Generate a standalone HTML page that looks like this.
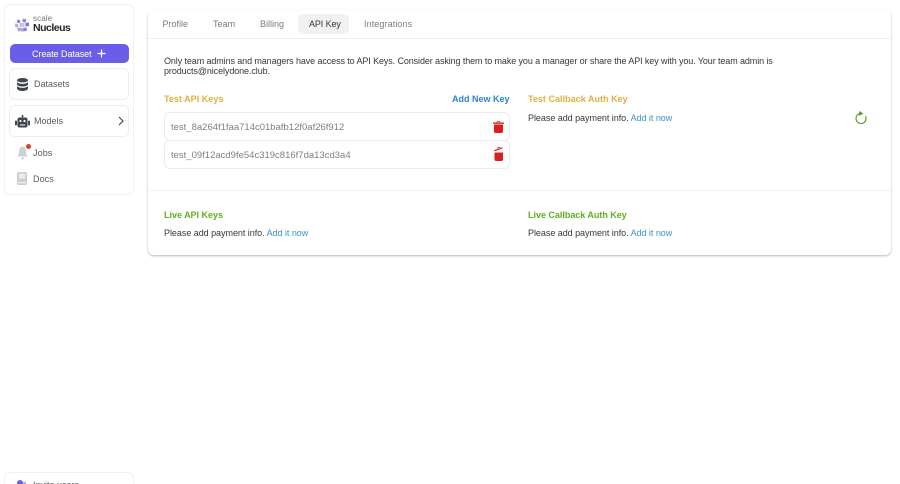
<!DOCTYPE html>
<html>
<head>
<meta charset="utf-8">
<style>
html,body{margin:0;padding:0;width:900px;height:484px;overflow:hidden;background:#fff;font-family:"Liberation Sans",sans-serif;color:#33373e;}
#w{position:relative;width:900px;height:484px;overflow:hidden;background:#fff;}
.a{position:absolute;white-space:nowrap;line-height:12px;font-size:9px;letter-spacing:0;}
.box{position:absolute;box-sizing:border-box;background:#fff;}
svg{position:absolute;overflow:visible;}
.link{color:#3a93c9;}
.y{color:#e0b040;font-weight:bold;letter-spacing:.03px;}
.g{color:#5fae22;font-weight:bold;letter-spacing:-.02px;}
.t{color:#777c84;letter-spacing:0;}
.k{color:#7c8087;font-size:9.5px;letter-spacing:0;}
.s{color:#565b63;}
</style>
</head>
<body>
<div id="w">
<!-- Sidebar -->
<div class="box" style="left:4px;top:4px;width:130px;height:191px;border:1px solid #f1f1f3;border-radius:6px;"></div>
<svg style="left:15px;top:18px" width="14" height="14" viewBox="0 0 14 14">
<g><path d="M2.500 1.500l3 .8-.8 3-3-.8z" fill="#8c7fd6"/><path d="M8 .5l3.500 1-1 3.300-3.300-1z" fill="#8f83da"/><path d="M0 5.500l3 .5v3.500l-3-.5z" fill="#b3abe6"/><rect x="4.500" y="5" width="5" height="4" fill="#c9c7d4"/><path d="M10.500 5l3.500-.5v3.500l-3.500.5z" fill="#8073d2"/><path d="M2 10l3-.5 1.500 3-3 1z" fill="#a9a0e0"/><path d="M8 10l3.500-.5.500 3-3.500 1z" fill="#8c7fd6"/><rect x="5.500" y="10" width="3" height="3.500" fill="#b3abe6"/></g>
</svg>
<div class="a" style="left:33px;top:12.500px;font-size:8px;color:#777;letter-spacing:.1px;">scale</div>
<div class="a" style="left:33px;top:22px;font-size:10.500px;font-weight:bold;color:#22252a;letter-spacing:-.5px;">Nucleus</div>
<div class="box" style="left:10px;top:44px;width:119px;height:19px;background:#6a5ee8;border-radius:5px;"></div>
<div class="a" style="left:32px;top:47.500px;color:#fff;letter-spacing:-.07px;">Create Dataset</div>
<svg style="left:97px;top:49px" width="9" height="9" viewBox="0 0 9 9"><path d="M4.500 0.500V8.500M0.500 4.500H8.500" stroke="#fff" stroke-width="1.200"/></svg>

<div class="box" style="left:9px;top:68px;width:120px;height:32px;border:1px solid #eeeef0;border-radius:6px;"></div>
<svg style="left:17px;top:78px" width="11" height="13" viewBox="0 0 11 13"><g fill="#3f4650"><ellipse cx="5.500" cy="2.200" rx="5.500" ry="2.200"/><path d="M0 4c1 1.300 3 1.900 5.500 1.900S10 5.300 11 4v2.200C11 7.500 8.500 8.500 5.500 8.500S0 7.500 0 6.200z"/><path d="M0 8c1 1.300 3 1.900 5.500 1.900S10 9.300 11 8v2.500C11 11.900 8.500 13 5.500 13S0 11.900 0 10.500z"/></g></svg>
<div class="a s" style="left:34px;top:78px;">Datasets</div>

<div class="box" style="left:9px;top:105px;width:120px;height:32px;border:1px solid #eeeef0;border-radius:6px;"></div>
<svg style="left:15px;top:115px" width="15" height="13" viewBox="0 0 15 13"><g fill="#3f4650"><rect x="2.500" y="2.500" width="10" height="10" rx="2"/><rect x="0" y="5.500" width="2" height="5" rx="1"/><rect x="13" y="5.500" width="2" height="5" rx="1"/><rect x="7" y="0" width="1" height="3"/><circle cx="7.500" cy="1" r="1"/></g><circle cx="5.500" cy="6" r="1.100" fill="#fff"/><circle cx="9.500" cy="6" r="1.100" fill="#fff"/><rect x="5" y="9.500" width="5" height="1" fill="#fff"/></svg>
<div class="a s" style="left:34px;top:115px;">Models</div>
<svg style="left:118px;top:116px" width="6" height="10" viewBox="0 0 6 10"><path d="M1 1L5 5L1 9" fill="none" stroke="#3f4650" stroke-width="1.100"/></svg>

<svg style="left:16px;top:146px" width="13" height="14" viewBox="0 0 13 14"><path d="M6.500 0.500C9 .5 10 3 10 6c0 2 1 3 2 4.500H1C2 9 3 8 3 6 3 3 4 .5 6.500 .5z" fill="#cdd0d4"/><circle cx="6.500" cy="12.300" r="1.300" fill="#cdd0d4"/></svg>
<div style="position:absolute;left:26px;top:144px;width:5px;height:5px;background:#d8432f;border-radius:50%;"></div>
<div class="a s" style="left:33px;top:147px;letter-spacing:.1px;">Jobs</div>
<svg style="left:17px;top:172px" width="10" height="13" viewBox="0 0 10 13"><rect width="10" height="13" rx="1.500" fill="#cccED2"/><rect x="2" y="1.500" width="6" height="5" fill="#ececee"/><rect x="1" y="10" width="8" height="1.200" fill="#f2f2f3"/></svg>
<div class="a s" style="left:33px;top:173px;letter-spacing:.1px;">Docs</div>

<div class="box" style="left:4px;top:472px;width:130px;height:30px;border:1px solid #f1f1f3;border-radius:6px;"></div>
<div style="position:absolute;left:17px;top:480px;width:6px;height:6px;background:#6a5ee8;border-radius:50%;"></div>
<div style="position:absolute;left:23px;top:482px;width:3px;height:3px;background:#a9a0e0;border-radius:50%;"></div>
<div class="a s" style="left:33px;top:479px;">Invite users</div>

<!-- Main card -->
<div class="box" style="left:148px;top:10px;width:743px;height:245px;border-radius:6px;box-shadow:0 1px 2px rgba(0,0,0,.28);"></div>
<div style="position:absolute;left:148px;top:38px;width:743px;height:1px;background:#eeeef0;"></div>
<div style="position:absolute;left:148px;top:190px;width:743px;height:1px;background:#f1f1f3;"></div>
<div class="box" style="left:298px;top:14px;width:51px;height:20px;background:#f1f1f2;border-radius:6px;"></div>
<div class="a t" style="left:162.500px;top:18px;">Profile</div>
<div class="a t" style="left:213px;top:18px;letter-spacing:.05px;">Team</div>
<div class="a t" style="left:260px;top:18px;">Billing</div>
<div class="a" style="left:309px;top:18px;color:#33373e;letter-spacing:-.1px;">API Key</div>
<div class="a t" style="left:364px;top:18px;letter-spacing:.1px;">Integrations</div>

<div class="a" style="left:164px;top:54.500px;letter-spacing:-.103px;">Only team admins and managers have access to API Keys. Consider asking them to make you a manager or share the API key with you. Your team admin is</div>
<div class="a" style="left:164px;top:64.500px;letter-spacing:-.09px;">products@nicelydone.club.</div>

<div class="a y" style="left:164px;top:93px;">Test API Keys</div>
<div class="a" style="left:452px;top:93px;color:#2f80d8;font-weight:bold;">Add New Key</div>

<div class="box" style="left:164px;top:112px;width:346px;height:29px;border:1px solid #ececee;border-radius:6px;"></div>
<div class="a k" style="left:171px;top:122px;">test_8a264f1faa714c01bafb12f0af26f912</div>
<svg style="left:493px;top:120px" width="11" height="13" viewBox="0 0 11 13"><g fill="#d9201f"><path d="M0 2.500h11v1.300H0z"/><path d="M3.500 2.500C3.500 .5 7.500 .5 7.500 2.500H6.500C6.500 1.500 4.500 1.500 4.500 2.500z"/><path d="M1 4.500h9V11.500c0 1-.7 1.500-1.500 1.500h-6C1.700 13 1 12.500 1 11.500z"/></g></svg>

<div class="box" style="left:164px;top:140px;width:346px;height:29px;border:1px solid #ececee;border-radius:6px;"></div>
<div class="a k" style="left:171px;top:150px;">test_09f12acd9fe54c319c816f7da13cd3a4</div>
<svg style="left:493px;top:146px" width="11" height="15" viewBox="0 0 11 15"><g fill="#d9201f"><path d="M1.500 6.500h8.500v7c0 .8-.6 1.500-1.500 1.500h-5.500c-.9 0-1.500-.7-1.500-1.500z"/><path d="M1 4.300L9.500 1.200l.4 1.100L1.400 5.400z"/><path d="M4 2.700C4.300 .8 6.500 0 7.500 1.500L6.700 2C6 1.300 5 1.800 5 2.600z"/></g></svg>

<div class="a y" style="left:528px;top:93px;">Test Callback Auth Key</div>
<div class="a" style="left:528px;top:112px;letter-spacing:-.04px;">Please add payment info. <span class="link">Add it now</span></div>
<svg style="left:855px;top:110px" width="13" height="14" viewBox="0 0 13 14"><path d="M6 3.500A5 5 0 1 0 10.500 6.300" fill="none" stroke="#5f9e3a" stroke-width="1.200"/><path d="M4.200 1L8.500 3.500 4.200 6z" fill="#5f9e3a"/></svg>

<div class="a g" style="left:164px;top:209px;">Live API Keys</div>
<div class="a" style="left:164px;top:227px;letter-spacing:-.04px;">Please add payment info. <span class="link">Add it now</span></div>
<div class="a g" style="left:528px;top:209px;">Live Callback Auth Key</div>
<div class="a" style="left:528px;top:227px;letter-spacing:-.04px;">Please add payment info. <span class="link">Add it now</span></div>
</div>
</body>
</html>
